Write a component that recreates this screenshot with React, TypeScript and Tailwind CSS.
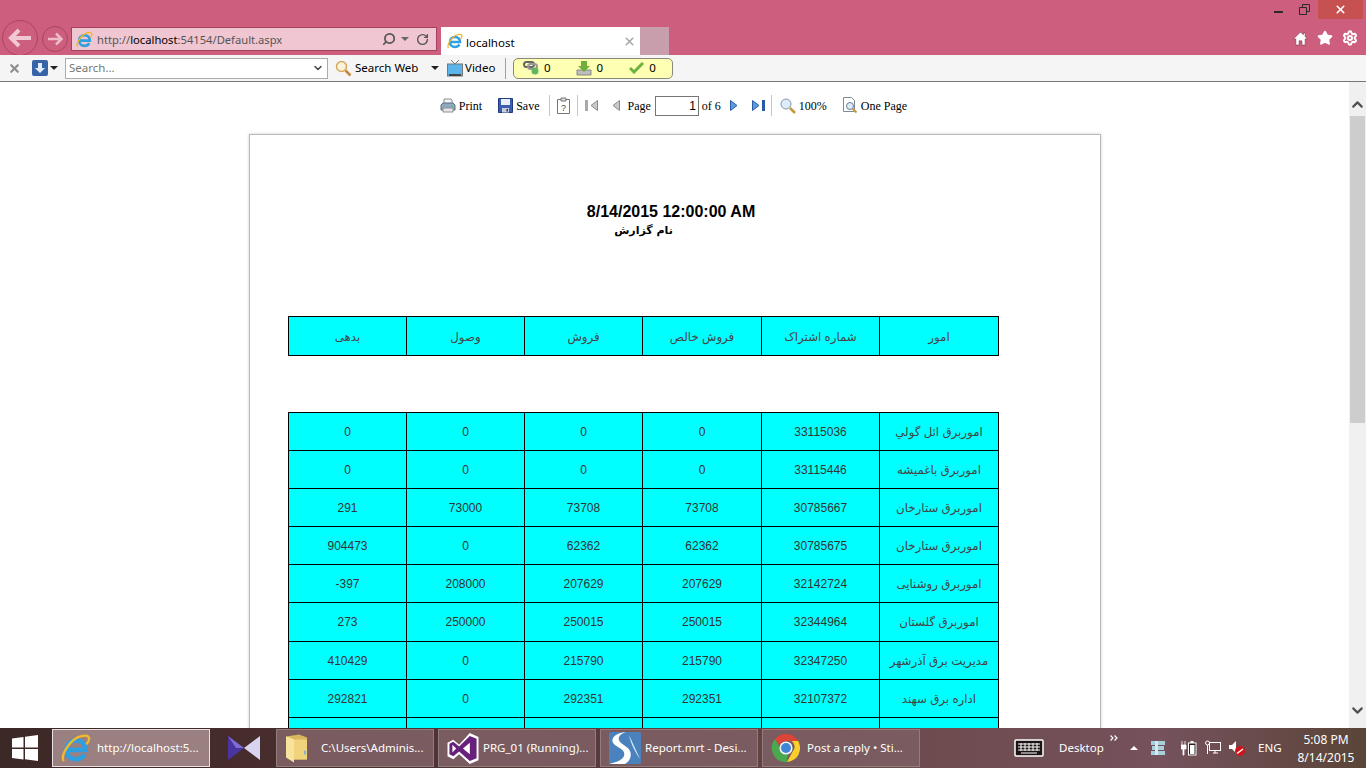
import type { ReactNode } from 'react';
import { ChevronDown, ChevronUp, Search, RotateCw, X, Star, Settings } from 'lucide-react';

const rows = [
  ['0', '0', '0', '0', '33115036', 'اموربرق ائل گولي'],
  ['0', '0', '0', '0', '33115446', 'اموربرق باغمیشه'],
  ['291', '73000', '73708', '73708', '30785667', 'اموربرق ستارخان'],
  ['904473', '0', '62362', '62362', '30785675', 'اموربرق ستارخان'],
  ['-397', '208000', '207629', '207629', '32142724', 'اموربرق روشنایی'],
  ['273', '250000', '250015', '250015', '32344964', 'اموربرق گلستان'],
  ['410429', '0', '215790', '215790', '32347250', 'مدیریت برق آذرشهر'],
  ['292821', '0', '292351', '292351', '32107372', 'اداره برق سهند'],
  ['', '', '', '', '', ''],
];

const headers = ['بدهی', 'وصول', 'فروش', 'فروش خالص', 'شماره اشتراک', 'امور'];

const IeLogo = ({ size = 18 }: { size?: number }) => (
  <svg width={size} height={size} viewBox="0 0 32 32" className="shrink-0">
    <path d="M8 18h18c0-6-4-10-10-10S6 12 6 18s4 10 10 10c4 0 7-2 9-5" fill="none" stroke="#2e9fe0" strokeWidth="5" />
    <path d="M3 30C-1 25 8 10 17 5c7-3 13-3 13 1 0 2-2 5-3 6" fill="none" stroke="#f2b928" strokeWidth="2.5" />
  </svg>
);

const ChromeLogo = () => (
  <svg width="30" height="30" viewBox="0 0 32 32" className="shrink-0">
    <path d="M16 1a15 15 0 0 1 13 7.5H16a7.5 7.5 0 0 0-7 4.8L4.2 6.5A15 15 0 0 1 16 1z" fill="#dc4437" />
    <path d="M29 8.500A15 15 0 0 1 17 31l6-11a7.5 7.5 0 0 0-1-11.500z" fill="#fbcf2c" />
    <path d="M4.200 6.500 9.800 16a7.5 7.5 0 0 0 8 6.700L17 31A15 15 0 0 1 4.200 6.500z" fill="#4aa84f" />
    <circle cx="16" cy="16" r="7" fill="#f4f4f4" />
    <circle cx="16" cy="16" r="5.3" fill="#3f86d6" />
  </svg>
);

const FolderIcon = () => (
  <svg width="24" height="31" viewBox="0 0 24 30" className="shrink-0">
    <path d="M1 3l13-2 8 3v22H5l-4-3z" fill="#d9b75c" />
    <path d="M1 3c4 1 6 2 8 3v23l-8-5z" fill="#f7e39b" />
    <path d="M9 6h13v20H9z" fill="#f0d37c" />
    <path d="M19 17h2v4h-2z" fill="#7fb4dc" />
  </svg>
);

const VsIcon = () => (
  <svg width="32" height="31" viewBox="0 0 32 32" className="shrink-0">
    <path d="M23 0l9 4v24l-9 4-11-10-6 5-6-3V10l6-3 6 5z" fill="#fff" />
    <path d="M23 3l7 3v20l-7 3-11-10-6 5-4-2V11l4-2 6 5z" fill="#68217a" />
    <path d="M23 10v12l-7-6z" fill="#fff" />
    <path d="M5 12v8l4-4z" fill="#fff" />
  </svg>
);

const KmpIcon = () => (
  <svg width="32" height="28" viewBox="0 0 32 24" className="shrink-0">
    <path d="M0 0l16 12L0 24z" fill="#4a35a0" />
    <path d="M32 0 16 12l16 12z" fill="#d8d4ef" />
    <path d="M0 0l16 12-8 0z" fill="#7f6cd0" />
  </svg>
);

const StiIcon = () => (
  <svg width="32" height="32" viewBox="0 0 32 32" className="shrink-0">
    <rect width="32" height="32" rx="2" fill="#4a82bd" />
    <path d="M17 0C5 1 0 8 6 13c4 3 11 5 9 11-1 3-6 6-15 8h16c5-3 7-8 5-13-2-5-10-7-11-11-1-3 1-6 7-8z" fill="#fff" />
    <path d="M20 3l11 24c-3-4-9-14-11-24z" fill="#dce9f5" />
  </svg>
);

const ToolbarIcons = {
  print: (
    <svg width="16" height="15" viewBox="0 0 16 15">
      <path d="M4 1h7l1 1v4H4z" fill="#f4f4f4" stroke="#8a8f96" />
      <path d="M1 7l2-2h10l2 2v5H1z" fill="#93a9c2" stroke="#5c6c80" />
      <path d="M3 10h10v4H3z" fill="#e8e8e8" stroke="#8a8f96" />
      <path d="M11 7.5h2V9h-2z" fill="#39d353" />
    </svg>
  ),
  save: (
    <svg width="15" height="15" viewBox="0 0 15 15">
      <path d="M.5.5h14v14H.5z" fill="#3b5cb0" stroke="#22397a" />
      <path d="M3 1h9v6H3z" fill="#eaf0fa" />
      <path d="M4 10h7v4.500H4z" fill="#c8cfdc" />
      <path d="M8.500 11H10v2.500H8.500z" fill="#22397a" />
    </svg>
  ),
  help: (
    <svg width="13" height="17" viewBox="0 0 13 17">
      <path d="M.5 2.5h12v14H.5z" fill="#fff" stroke="#777" />
      <path d="M4 1h5v3H4z" fill="#ddd" stroke="#777" />
      <text x="6.5" y="14" textAnchor="middle" fontSize="9" fontFamily="Liberation Sans" fill="#444">?</text>
    </svg>
  ),
  first: (
    <svg width="13" height="11" viewBox="0 0 13 11">
      <path d="M0 0h3v11H0z" fill="#a9a9a9" />
      <path d="M12.500.5v10L6 5.500z" fill="#c9c9c9" stroke="#8a8a8a" />
    </svg>
  ),
  prev: (
    <svg width="8" height="11" viewBox="0 0 8 11">
      <path d="M7.500.5v10L1 5.500z" fill="#c9c9c9" stroke="#8a8a8a" />
    </svg>
  ),
  next: (
    <svg width="8" height="11" viewBox="0 0 8 11">
      <path d="M.5.5v10L7 5.500z" fill="#5b9bdc" stroke="#2a5ba8" />
    </svg>
  ),
  last: (
    <svg width="13" height="11" viewBox="0 0 13 11">
      <path d="M.5.5v10L7 5.500z" fill="#5b9bdc" stroke="#2a5ba8" />
      <path d="M10 0h3v11h-3z" fill="#2a5ba8" />
    </svg>
  ),
  zoom: (
    <svg width="16" height="16" viewBox="0 0 16 16">
      <circle cx="6" cy="6" r="5" fill="#dcecfa" stroke="#8a97a8" />
      <path d="M10 10l5 5" stroke="#c8963c" strokeWidth="2.5" />
    </svg>
  ),
  onePage: (
    <svg width="16" height="17" viewBox="0 0 16 17">
      <path d="M1.500.5h8l3 3v11h-11z" fill="#fff" stroke="#7d8a99" />
      <circle cx="8" cy="9" r="3.5" fill="#dcecfa" stroke="#6f7d8c" />
      <path d="M10.500 11.500l4 4" stroke="#c8963c" strokeWidth="2" />
    </svg>
  ),
};

const ToolbarSep = () => <div className="h-[21px] w-px bg-[#c4c4c4]" />;

const ToolItem = ({ icon, label, className }: { icon: ReactNode; label: string; className?: string }) => (
  <div className={'flex items-center gap-[3px] ' + (className ?? '')}>
    {icon}
    <span>{label}</span>
  </div>
);

const ReportToolbar = () => (
  <div className="flex h-[52px] items-center justify-center pr-[2px] pb-[5px] font-['Liberation_Serif',serif] text-[12px] text-black">
    <div className="flex items-center">
      <ToolItem icon={ToolbarIcons.print} label="Print" />
      <ToolItem icon={ToolbarIcons.save} label="Save" className="ml-[16px]" />
      <div className="ml-[9px]"><ToolbarSep /></div>
      <div className="ml-[7px]">{ToolbarIcons.help}</div>
      <div className="ml-[7px]"><ToolbarSep /></div>
      <div className="ml-[7px]">{ToolbarIcons.first}</div>
      <div className="ml-[14px]">{ToolbarIcons.prev}</div>
      <span className="ml-[8px]">Page</span>
      <div className="ml-[4px] flex h-[20px] w-[44px] items-center justify-end border border-[#767676] pr-[2px] font-['Liberation_Sans',sans-serif] text-[12px]">1</div>
      <span className="ml-[3px]">of 6</span>
      <div className="ml-[9px]">{ToolbarIcons.next}</div>
      <div className="ml-[14px]">{ToolbarIcons.last}</div>
      <div className="ml-[6px]"><ToolbarSep /></div>
      <ToolItem icon={ToolbarIcons.zoom} label="100%" className="ml-[8px]" />
      <ToolItem icon={ToolbarIcons.onePage} label="One Page" className="ml-[15px]" />
    </div>
  </div>
);

const cellClass =
  "border border-black text-center align-middle font-['Liberation_Sans','DejaVu_Sans',sans-serif]";

const Cols = () => (
  <colgroup>
    <col className="w-[118px]" />
    <col className="w-[118px]" />
    <col className="w-[118px]" />
    <col className="w-[119px]" />
    <col className="w-[118px]" />
    <col className="w-[119px]" />
  </colgroup>
);

const ReportPage = () => (
  <div className="ml-[249px] h-[700px] w-[852px] shrink-0 border border-[#b9b9b9] bg-white pl-[38px] shadow-[0_0_3px_#ccc]">
    <div className="w-[711px] pt-[67px] text-black">
      <div className="pl-[55px] text-center font-['Liberation_Sans',sans-serif] text-[16px] leading-[20px] font-bold">
        8/14/2015 12:00:00 AM
      </div>
      <div dir="rtl" className="pt-px text-center font-['DejaVu_Sans',sans-serif] text-[11px] leading-[16px] font-bold">
        نام گزارش
      </div>
    </div>
    <table className="mt-[77px] w-[711px] table-fixed border-collapse bg-[#00ffff]">
      <Cols />
      <tbody>
        <tr className="h-[39px]">
          {headers.map((h) => (
            <td key={h} dir="rtl" className={cellClass + ' pt-[3px] text-[11.8px] text-[#444]'}>{h}</td>
          ))}
        </tr>
      </tbody>
    </table>
    <table className="mt-[56px] w-[711px] table-fixed border-collapse bg-[#00ffff]">
      <Cols />
      <tbody>
        {rows.map((row, i) => (
          <tr key={i} className={i === 5 ? 'h-[39px]' : 'h-[38px]'}>
            {row.map((c, j) => (
              <td
                key={j}
                dir={j === 5 ? 'rtl' : 'ltr'}
                className={cellClass + (j === 5 ? ' pt-[2px] text-[11.8px] text-[#444]' : ' text-[12px] text-[#333]')}
              >
                {c}
              </td>
            ))}
          </tr>
        ))}
      </tbody>
    </table>
  </div>
);

const Scrollbar = () => (
  <div className="flex w-[17px] shrink-0 flex-col items-center bg-[#f0f0f0]">
    <div className="flex h-[34px] w-full items-end justify-center pb-[3px]">
      <ChevronUp size={17} strokeWidth={3} className="text-[#505050]" />
    </div>
    <div className="h-[307px] w-[15px] bg-[#cdcdcd]" />
    <div className="flex-1" />
    <div className="flex h-[32px] w-full items-start justify-center pt-[6px]">
      <ChevronDown size={17} strokeWidth={3} className="text-[#505050]" />
    </div>
  </div>
);

const TaskButton = ({ icon, label, active }: { icon: ReactNode; label: string; active?: boolean }) => (
  <div
    className={
      'flex h-[38px] w-[158px] shrink-0 items-center border pl-[8px] text-[11.5px] text-white ' +
      (active ? 'border-[#e8e2e2] bg-[#9a8080]' : 'border-[#8f7f7a] bg-[#7a5c60]')
    }
  >
    <div className="flex w-[36px] shrink-0 justify-start">{icon}</div>
    <span className="truncate">{label}</span>
  </div>
);

const TitleBar = () => (
  <div className="flex h-[55px] justify-between bg-[#cd5e7d]">
    <div className="flex items-end">
      <div className="ml-[2px] mb-[-1px] flex h-[36px] w-[36px] items-center justify-center rounded-full border border-[#a8465f]">
        <svg width="24" height="20" viewBox="0 0 24 20">
          <path d="M11 2 3 10l8 8M3 10h20" fill="none" stroke="#f0c8d3" strokeWidth="4" />
        </svg>
      </div>
      <div className="ml-[4px] mb-[3px] flex h-[26px] w-[26px] items-center justify-center rounded-full border border-[#a8465f]">
        <svg width="16" height="14" viewBox="0 0 16 14">
          <path d="M9 1.500 14.500 7 9 12.500M14 7H1" fill="none" stroke="#eebcc9" strokeWidth="2.5" />
        </svg>
      </div>
      <div className="mb-[4px] ml-[3px] flex h-[24px] w-[366px] items-center border border-[#a3425f] bg-[#efc6d2] pl-[4px] pr-[5px] font-['Noto_Sans',sans-serif] text-[11.2px] text-[#555]">
        <IeLogo size={17} />
        <span className="ml-[4px] flex-1 pt-[3px]">
          http://<span className="text-black">localhost</span>:54154/Default.aspx
        </span>
        <Search size={14} strokeWidth={3} className="-scale-x-100 text-[#555]" />
        <div className="mx-[5px] h-0 w-0 border-x-[4px] border-t-[4px] border-x-transparent border-t-[#666]" />
        <RotateCw size={13} strokeWidth={2.5} className="mx-[2px] text-[#555]" />
      </div>
      <div className="ml-[4px] flex h-[28px] w-[199px] items-center bg-white pl-[6px] pr-[4px] font-['Noto_Sans',sans-serif] text-[11.5px] text-black">
        <IeLogo size={16} />
        <span className="ml-[3px] flex-1 pt-[3px]">localhost</span>
        <X size={13} strokeWidth={3} className="text-[#a8a8a8]" />
      </div>
      <div className="h-[28px] w-[29px] bg-[#c89dac]" />
    </div>
    <div className="flex flex-col items-end">
      <div className="mr-[3px] flex h-[19px] items-start">
        <div className="mt-[11px] mr-[16px] h-[2px] w-[9px] bg-[#2a2a2a]" />
        <svg width="11" height="11" viewBox="0 0 11 11" className="mt-[4px] mr-[8px]">
          <path d="M.5 3.500h7v7h-7zM3.500 3V.5h7v7H8" fill="none" stroke="#2a2a2a" />
        </svg>
        <div className="flex h-[19px] w-[45px] items-center justify-center bg-[#c75150]">
          <X size={13} strokeWidth={3} className="text-white" />
        </div>
      </div>
      <div className="mt-[11px] mr-[8px] flex items-center gap-[9px]">
        <svg width="15" height="15" viewBox="0 0 16 16">
          <path d="M8 1 .5 8.500H3V15h3.500v-4.500h3V15H13V8.500h2.500L13 6V2h-2v2z" fill="#fff" stroke="#7a3048" strokeWidth="0.6" />
        </svg>
        <Star size={16} fill="#fff" className="text-white" />
        <Settings size={16} strokeWidth={3} className="text-white" />
      </div>
    </div>
  </div>
);

const CommandBar = () => (
  <div className="flex h-[27px] items-center border-b border-[#777] bg-[#f5f5f5] font-['Noto_Sans',sans-serif] text-[11.5px] text-black">
    <X size={13} strokeWidth={4} className="ml-[8px] text-[#8d8d8d]" />
    <div className="ml-[11px] flex h-[16px] w-[16px] items-center justify-center rounded-[2px] bg-[#3763a8]">
      <svg width="12" height="12" viewBox="0 0 12 12">
        <path d="M4 1h4v5h3L6 11 1 6h3z" fill="#e2ecf8" />
      </svg>
    </div>
    <div className="ml-[2px] h-0 w-0 border-x-[4px] border-t-[4px] border-x-transparent border-t-[#222]" />
    <div className="ml-[7px] flex h-[21px] w-[263px] items-center justify-between border border-[#ababab] bg-white px-[3px] text-[#777]">
      <span>Search...</span>
      <ChevronDown size={12} strokeWidth={3} className="text-[#444]" />
    </div>
    <svg width="17" height="17" viewBox="0 0 17 17" className="ml-[7px]">
      <circle cx="6.5" cy="6.5" r="5" fill="#fbf3dc" stroke="#d8a85a" strokeWidth="1.5" />
      <path d="M10.500 10.500l5 5" stroke="#c8863c" strokeWidth="2.5" />
    </svg>
    <span className="ml-[3px] w-[62px] whitespace-nowrap">Search Web</span>
    <div className="ml-[14px] h-0 w-0 border-x-[4px] border-t-[4px] border-x-transparent border-t-[#222]" />
    <svg width="16" height="17" viewBox="0 0 16 17" className="ml-[8px]">
      <path d="M4 0l4 4 4-4" fill="none" stroke="#777" />
      <rect x="0.5" y="4" width="15" height="12" fill="#5bb4ea" stroke="#777" />
      <rect x="2" y="14" width="12" height="2" fill="#444" />
    </svg>
    <span className="ml-[2px] w-[31px]">Video</span>
    <div className="ml-[9px] h-[21px] w-px bg-[#a0a0a0]" />
    <div className="ml-[7px] flex h-[21px] w-[160px] items-center rounded-[5px] border border-[#8a8a7a] bg-[#ffffb4] pl-[9px]">
      <svg width="17" height="14" viewBox="0 0 17 14">
        <rect x="1" y="1" width="10" height="5" rx="2.5" fill="none" stroke="#666" strokeWidth="2" />
        <rect x="5" y="3" width="9" height="5" rx="2.5" fill="none" stroke="#999" strokeWidth="2" />
        <circle cx="12" cy="10" r="3.5" fill="#5fb760" />
      </svg>
      <span className="ml-[4px]">0</span>
      <svg width="16" height="15" viewBox="0 0 16 15" className="ml-[25px]">
        <path d="M1 9h14v5H1z" fill="#bdbdbd" stroke="#888" />
        <path d="M5 0h6v5h3L8 11 2 5h3z" fill="#6fae3c" />
      </svg>
      <span className="ml-[5px]">0</span>
      <svg width="15" height="12" viewBox="0 0 15 12" className="ml-[26px]">
        <path d="M1 6l4 4 9-9" fill="none" stroke="#6db33f" strokeWidth="3" />
      </svg>
      <span className="ml-[5px]">0</span>
    </div>
  </div>
);

const Taskbar = () => (
  <div className="flex h-[40px] shrink-0 items-center bg-[linear-gradient(90deg,#3c2826_0%,#4a2e2e_25%,#5e3e40_50%,#6d4a4c_65%,#75525c_85%,#5a4438_100%)] font-['Noto_Sans',sans-serif]">
    <svg width="26" height="26" viewBox="0 0 26 26" className="ml-[12px] shrink-0">
      <path d="M0 3.500 11.500 2v10.500H0zM13 1.800 26 0v12.500H13zM0 14h11.500v10.500L0 23zM13 14h13v12l-13-1.800z" fill="#fff" />
    </svg>
    <div className="ml-[14px]">
      <TaskButton active icon={<IeLogo size={30} />} label="http://localhost:5..." />
    </div>
    <div className="ml-[18px]"><KmpIcon /></div>
    <div className="ml-[16px]">
      <TaskButton icon={<FolderIcon />} label={'C:\\Users\\Adminis...'} />
    </div>
    <div className="ml-[4px]"><TaskButton icon={<VsIcon />} label="PRG_01 (Running)..." /></div>
    <div className="ml-[4px]"><TaskButton icon={<StiIcon />} label="Report.mrt - Desi..." /></div>
    <div className="ml-[4px]"><TaskButton icon={<ChromeLogo />} label="Post a reply • Sti..." /></div>
    <div className="flex-1" />
    <svg width="30" height="18" viewBox="0 0 30 18" className="shrink-0">
      <rect x="1" y="1" width="28" height="16" rx="1" fill="#1c1414" stroke="#fff" strokeWidth="1.5" />
      <path d="M4 5h22M4 8h22M4 11h22M7 14h16M7 4v8M11 4v8M15 4v8M19 4v8M23 4v8" stroke="#fff" />
    </svg>
    <span className="ml-[15px] w-[43px] text-[11.5px] text-white">Desktop</span>
    <svg width="8" height="6" viewBox="0 0 8 6" className="mb-[20px] ml-[8px] shrink-0">
      <path d="M.5.5 3 3 .5 5.500M4.500.5 7 3 4.500 5.500" fill="none" stroke="#fff" strokeWidth="1.2" />
    </svg>
    <div className="ml-[12px] h-0 w-0 border-x-[4px] border-b-[4px] border-x-transparent border-b-white" />
    <svg width="16" height="16" viewBox="0 0 16 16" className="ml-[12px] shrink-0">
      <path d="M1 1h14v4H1zM2 6h12v4H2zM1 11h14v4H1z" fill="#a8cfdc" />
      <path d="M5 1h3v14H5z" fill="#d7e8ee" />
    </svg>
    <svg width="16" height="16" viewBox="0 0 16 16" className="ml-[15px] shrink-0">
      <path d="M1 1v4M4 1v4M0 5h5v4H3v6H2V9H0z" fill="#fff" stroke="#fff" strokeWidth="0.8" />
      <rect x="7.5" y="3" width="7.5" height="12" fill="#2a2020" stroke="#fff" />
      <rect x="9.5" y="1" width="3" height="2" fill="#fff" />
      <rect x="9" y="5" width="4.5" height="9" fill="#fff" />
    </svg>
    <svg width="16" height="16" viewBox="0 0 16 16" className="ml-[8px] shrink-0">
      <rect x="4.5" y="2.5" width="11" height="8" fill="none" stroke="#fff" />
      <path d="M8 13h5M10 11v2" stroke="#fff" />
      <circle cx="2.5" cy="3" r="2" fill="none" stroke="#fff" />
      <path d="M2.500 5v9" stroke="#fff" />
    </svg>
    <svg width="16" height="16" viewBox="0 0 16 16" className="ml-[8px] shrink-0">
      <path d="M0 5h3l4-4v12L3 9H0z" fill="#fff" />
      <circle cx="11" cy="11" r="5" fill="#d3131c" />
      <path d="M8 13.500 14 9" stroke="#fff" strokeWidth="1.5" />
    </svg>
    <span className="ml-[13px] w-[23px] text-[11.5px] whitespace-nowrap text-white">ENG</span>
    <div className="mr-[10px] ml-[15px] flex w-[60px] flex-col items-center pt-[2px] text-[12px] leading-[18px] text-white">
      <span>5:08 PM</span>
      <span>8/14/2015</span>
    </div>
  </div>
);

export default function App() {
  return (
    <div className="flex h-screen w-full flex-col overflow-hidden bg-white">
      <TitleBar />
      <CommandBar />
      <div className="flex min-h-0 flex-1">
        <div className="min-w-0 flex-1 overflow-hidden">
          <ReportToolbar />
          <div className="flex">
            <ReportPage />
          </div>
        </div>
        <Scrollbar />
      </div>
      <Taskbar />
    </div>
  );
}
